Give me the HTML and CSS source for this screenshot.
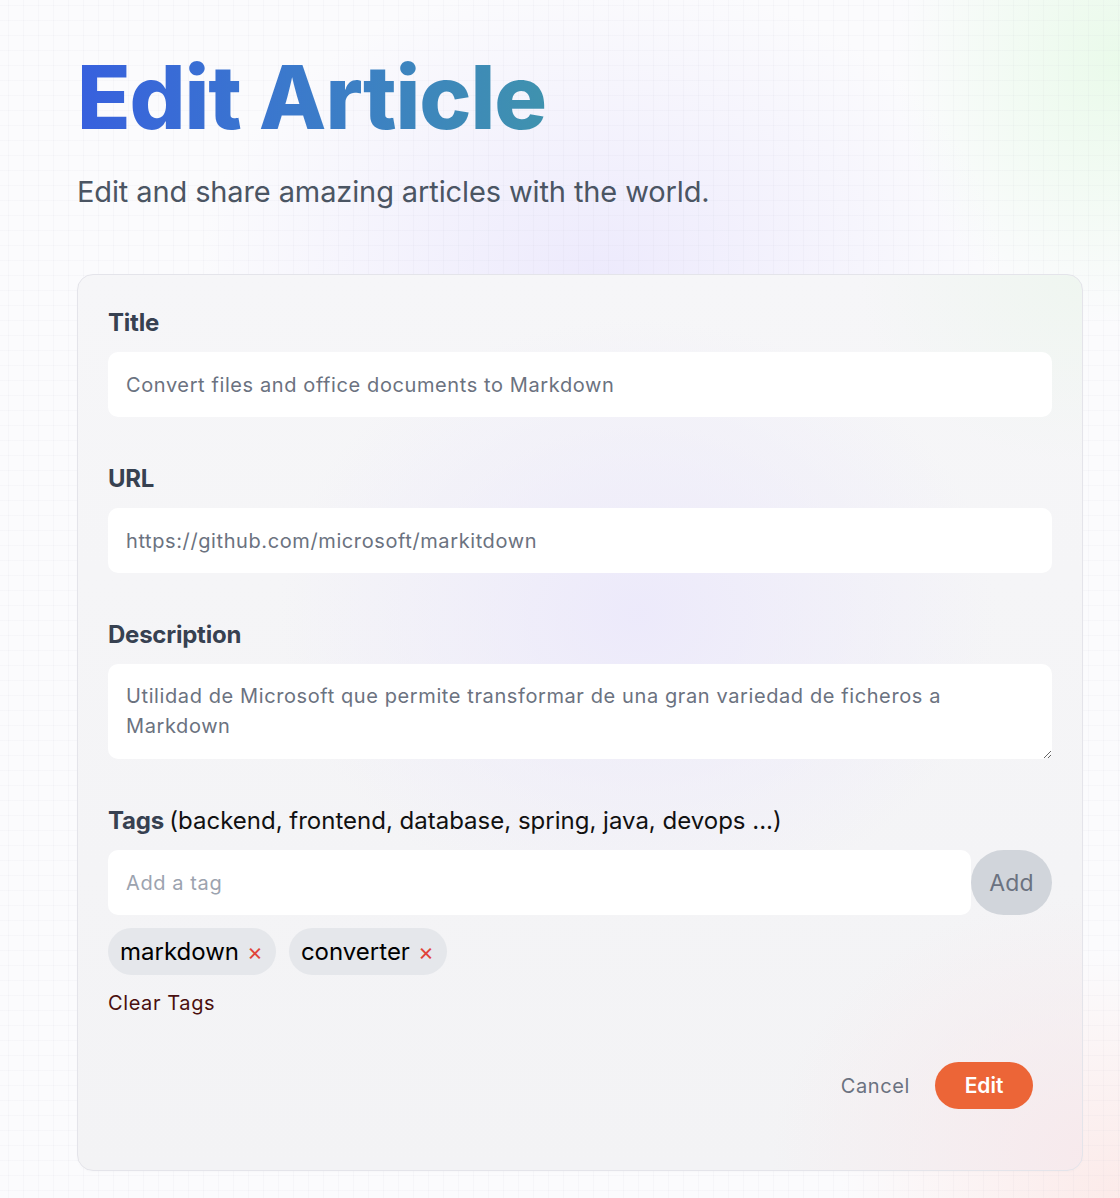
FILE: index.html
```html
<!DOCTYPE html>
<html lang="en">
<head>
<meta charset="utf-8">
<title>Edit Article</title>
<link rel="stylesheet" href="styles.css">
</head>
<body>
<div class="bg"></div>
<main class="page">
  <header class="hero">
    <h1 class="hero-title">Edit Article</h1>
    <p class="hero-sub">Edit and share amazing articles with the world.</p>
  </header>
  <form class="card">
    <div class="field">
      <label class="label">Title</label>
      <input class="input" type="text" value="Convert files and office documents to Markdown">
    </div>
    <div class="field">
      <label class="label">URL</label>
      <input class="input" type="text" value="https://github.com/microsoft/markitdown">
    </div>
    <div class="field">
      <label class="label">Description</label>
      <textarea class="input textarea" rows="2">Utilidad de Microsoft que permite transformar de una gran variedad de ficheros a Markdown</textarea>
    </div>
    <div class="field">
      <label class="label">Tags <span class="hint">(backend, frontend, database, spring, java, devops ...)</span></label>
      <div class="tag-row">
        <input class="input tag-input" type="text" placeholder="Add a tag">
        <button type="button" class="add-btn">Add</button>
      </div>
      <div class="chips">
        <span class="chip">markdown <span class="chip-x">×</span></span>
        <span class="chip">converter <span class="chip-x">×</span></span>
      </div>
      <a class="clear">Clear Tags</a>
    </div>
    <div class="actions">
      <button type="button" class="cancel">Cancel</button>
      <button type="button" class="submit">Edit</button>
    </div>
  </form>
</main>
</body>
</html>
```
FILE: styles.css
```css
* { box-sizing: border-box; }
html, body { margin: 0; padding: 0; }
body {
  font-family: Inter, "Noto Sans", sans-serif;
  background: #ffffff;
  min-height: 1198px;
  position: relative;
  overflow: hidden;
}
.bg {
  position: absolute;
  inset: 0;
  z-index: 0;
  background:
    linear-gradient(rgba(120,120,150,0.035) 1px, transparent 1px) 0 5px / 15px 15px,
    linear-gradient(90deg, rgba(120,120,150,0.035) 1px, transparent 1px) 8px 0 / 15px 15px,
    radial-gradient(ellipse 560px 420px at 600px 280px, rgba(232,228,252,0.75), transparent 72%),
    radial-gradient(ellipse 320px 380px at 1120px 60px, rgba(228,250,228,0.75), transparent 70%),
    radial-gradient(ellipse 400px 350px at 1120px 1198px, rgba(252,230,228,0.8), transparent 70%),
    #fbfbfd;
}
.page {
  position: relative;
  z-index: 1;
  padding: 53px 37px 0 77px;
}
.hero-title {
  margin: 0;
  font-size: 88px;
  line-height: 1;
  font-weight: 800;
  letter-spacing: -0.013em;
  background: linear-gradient(90deg, #3760de 0%, #3b79cc 45%, #3f92ae 100%);
  -webkit-background-clip: text;
  background-clip: text;
  color: transparent;
  display: inline-block;
}
.hero-sub {
  margin: 33px 0 0;
  font-size: 29px;
  line-height: 36px;
  color: #4b5563;
  letter-spacing: -0.004em;
}
.card {
  margin-top: 64px;
  width: 1006px;
  border: 1px solid #e4e4ea;
  border-radius: 16px;
  padding: 32px 30px 61px 30px;
  background:
    radial-gradient(ellipse 460px 380px at 560px 340px, rgba(236,233,251,0.95), transparent 78%),
    radial-gradient(ellipse 400px 330px at 1006px 880px, rgba(247,233,236,0.95), transparent 78%),
    radial-gradient(ellipse 300px 250px at 1006px 0px, rgba(238,246,239,0.9), transparent 75%),
    linear-gradient(180deg, #f6f6f8 0%, #f3f3f5 100%);
  box-shadow: 0 1px 3px rgba(0,0,0,0.02);
}
.field { margin-bottom: 46px; }
.field:nth-child(4) { margin-bottom: 45px; }
.label {
  display: block;
  font-size: 24px;
  line-height: 32px;
  font-weight: 700;
  color: #374151;
  margin-bottom: 13px;
  letter-spacing: -0.01em;
}
.hint {
  font-weight: 400;
  color: #111111;
  letter-spacing: 0;
}
.input {
  display: block;
  width: 100%;
  height: 65px;
  border: none;
  border-radius: 10px;
  background: #ffffff;
  padding: 0 18px;
  font-family: Inter, "Noto Sans", sans-serif;
  font-size: 20px;
  letter-spacing: 0.03em;
  color: #6b7280;
  outline: none;
}
.input::placeholder { color: #9ca3af; }
.textarea {
  height: 95px;
  padding: 17px 18px 18px;
  line-height: 30px;
  resize: vertical;
}
.tag-row {
  display: flex;
  align-items: stretch;
}
.tag-input { flex: 1; width: auto; }
.add-btn {
  width: 81px;
  height: 65px;
  border: none;
  border-radius: 40px;
  background: #d1d5db;
  color: #6b7280;
  font-family: Inter, "Noto Sans", sans-serif;
  font-size: 23px;
  letter-spacing: 0.01em;
  padding: 0;
}
.chips {
  display: flex;
  gap: 13px;
  margin-top: 13px;
}
.chip {
  display: inline-flex;
  align-items: center;
  height: 47px;
  padding: 0 13px 0 12px;
  border-radius: 24px;
  background: #e5e7eb;
  font-size: 24px;
  letter-spacing: 0;
  color: #000;
}
.chip-x {
  color: #e0453a;
  font-size: 24px;
  margin-left: 8px;
  line-height: 1;
}
.clear {
  display: inline-block;
  margin-top: 14px;
  font-size: 20px;
  line-height: 28px;
  letter-spacing: 0.03em;
  color: #4a0f0f;
}
.actions {
  display: flex;
  justify-content: flex-end;
  align-items: center;
  gap: 25px;
  padding-right: 19px;
}
.cancel {
  border: none;
  background: transparent;
  font-family: Inter, "Noto Sans", sans-serif;
  font-size: 20px;
  letter-spacing: 0.03em;
  color: #6b7280;
  padding: 0;
}
.submit {
  width: 98px;
  height: 47px;
  border: none;
  border-radius: 24px;
  background: #ec6537;
  color: #ffffff;
  font-family: Inter, "Noto Sans", sans-serif;
  font-size: 21px;
  font-weight: 600;
}
```
